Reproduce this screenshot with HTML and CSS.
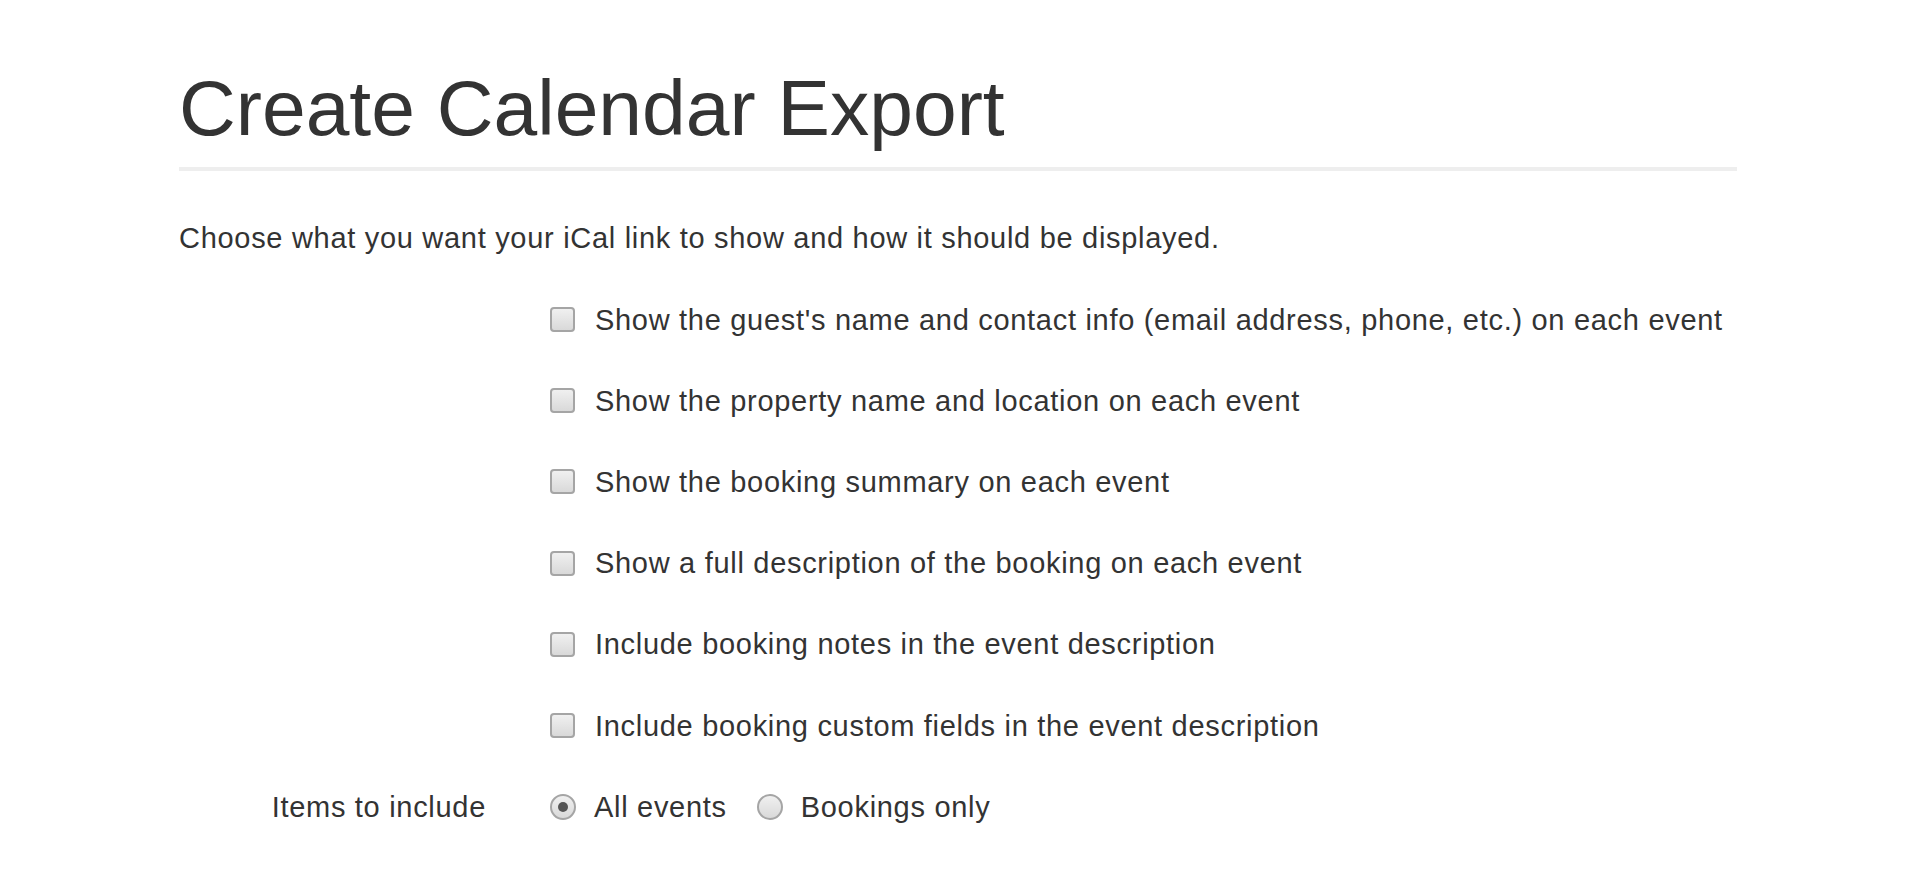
FILE: index.html
```html
<!DOCTYPE html>
<html>
<head>
<meta charset="utf-8">
<title>Create Calendar Export</title>
<link rel="stylesheet" href="styles.css">
</head>
<body>
<div class="page">
  <h1 class="title">Create Calendar Export</h1>
  <div class="rule"></div>
  <p class="intro">Choose what you want your iCal link to show and how it should be displayed.</p>
  <form class="form">
    <div class="row"><div class="label"></div><label class="opt"><input type="checkbox" class="cb"><span>Show the guest's name and contact info (email address, phone, etc.) on each event</span></label></div>
    <div class="row"><div class="label"></div><label class="opt"><input type="checkbox" class="cb"><span>Show the property name and location on each event</span></label></div>
    <div class="row"><div class="label"></div><label class="opt"><input type="checkbox" class="cb"><span>Show the booking summary on each event</span></label></div>
    <div class="row"><div class="label"></div><label class="opt"><input type="checkbox" class="cb"><span>Show a full description of the booking on each event</span></label></div>
    <div class="row"><div class="label"></div><label class="opt"><input type="checkbox" class="cb"><span>Include booking notes in the event description</span></label></div>
    <div class="row"><div class="label"></div><label class="opt"><input type="checkbox" class="cb"><span>Include booking custom fields in the event description</span></label></div>
    <div class="row">
      <div class="label">Items to include</div>
      <div class="radios">
        <label class="opt"><input type="radio" name="items" class="rb" checked><span>All events</span></label>
        <label class="opt"><input type="radio" name="items" class="rb"><span>Bookings only</span></label>
      </div>
    </div>
  </form>
</div>
</body>
</html>
```

FILE: styles.css
```css
html, body {
  margin: 0;
  padding: 0;
  background: #ffffff;
}
body {
  font-family: "Liberation Sans", Arial, Helvetica, sans-serif;
  color: #333333;
}
.page {
  width: 1558px;
  margin-left: calc(50% - 781px);
  padding-top: 65px;
  box-sizing: border-box;
}
.title {
  margin: 0;
  font-size: 78.6px;
  line-height: 86px;
  font-weight: 400;
  color: #333333;
}
.rule {
  margin-top: 16px;
  height: 4px;
  background: #eeeeee;
}
.intro {
  margin: 47px 0 0 0;
  font-size: 29px;
  line-height: 40px;
  letter-spacing: 0.7px;
}
.form {
  margin-top: 21px;
  display: flex;
  flex-direction: column;
}
.row {
  display: grid;
  grid-template-columns: 307px 1fr;
  column-gap: 64px;
  height: 81.2px;
  align-items: center;
}
.label {
  text-align: right;
  font-size: 29px;
  line-height: 40px;
  letter-spacing: 0.7px;
}
.opt {
  display: flex;
  align-items: center;
  gap: 20px;
  font-size: 29px;
  line-height: 40px;
  letter-spacing: 0.7px;
  white-space: nowrap;
}
.radios {
  display: flex;
  align-items: center;
  gap: 30px;
}
.radios .opt {
  gap: 18px;
}
.cb, .rb {
  -webkit-appearance: none;
  appearance: none;
  margin: 0;
  flex: none;
  box-sizing: border-box;
  border: 2px solid #a5a5a5;
  background: linear-gradient(#f0f0f0, #d9d9d9);
}
.cb {
  width: 25px;
  height: 25px;
  border-radius: 4px;
}
.rb {
  width: 26px;
  height: 26px;
  border-radius: 50%;
  position: relative;
}
.rb:checked::after {
  content: "";
  position: absolute;
  left: 6px;
  top: 6px;
  width: 10px;
  height: 10px;
  border-radius: 50%;
  background: #555555;
}
```
